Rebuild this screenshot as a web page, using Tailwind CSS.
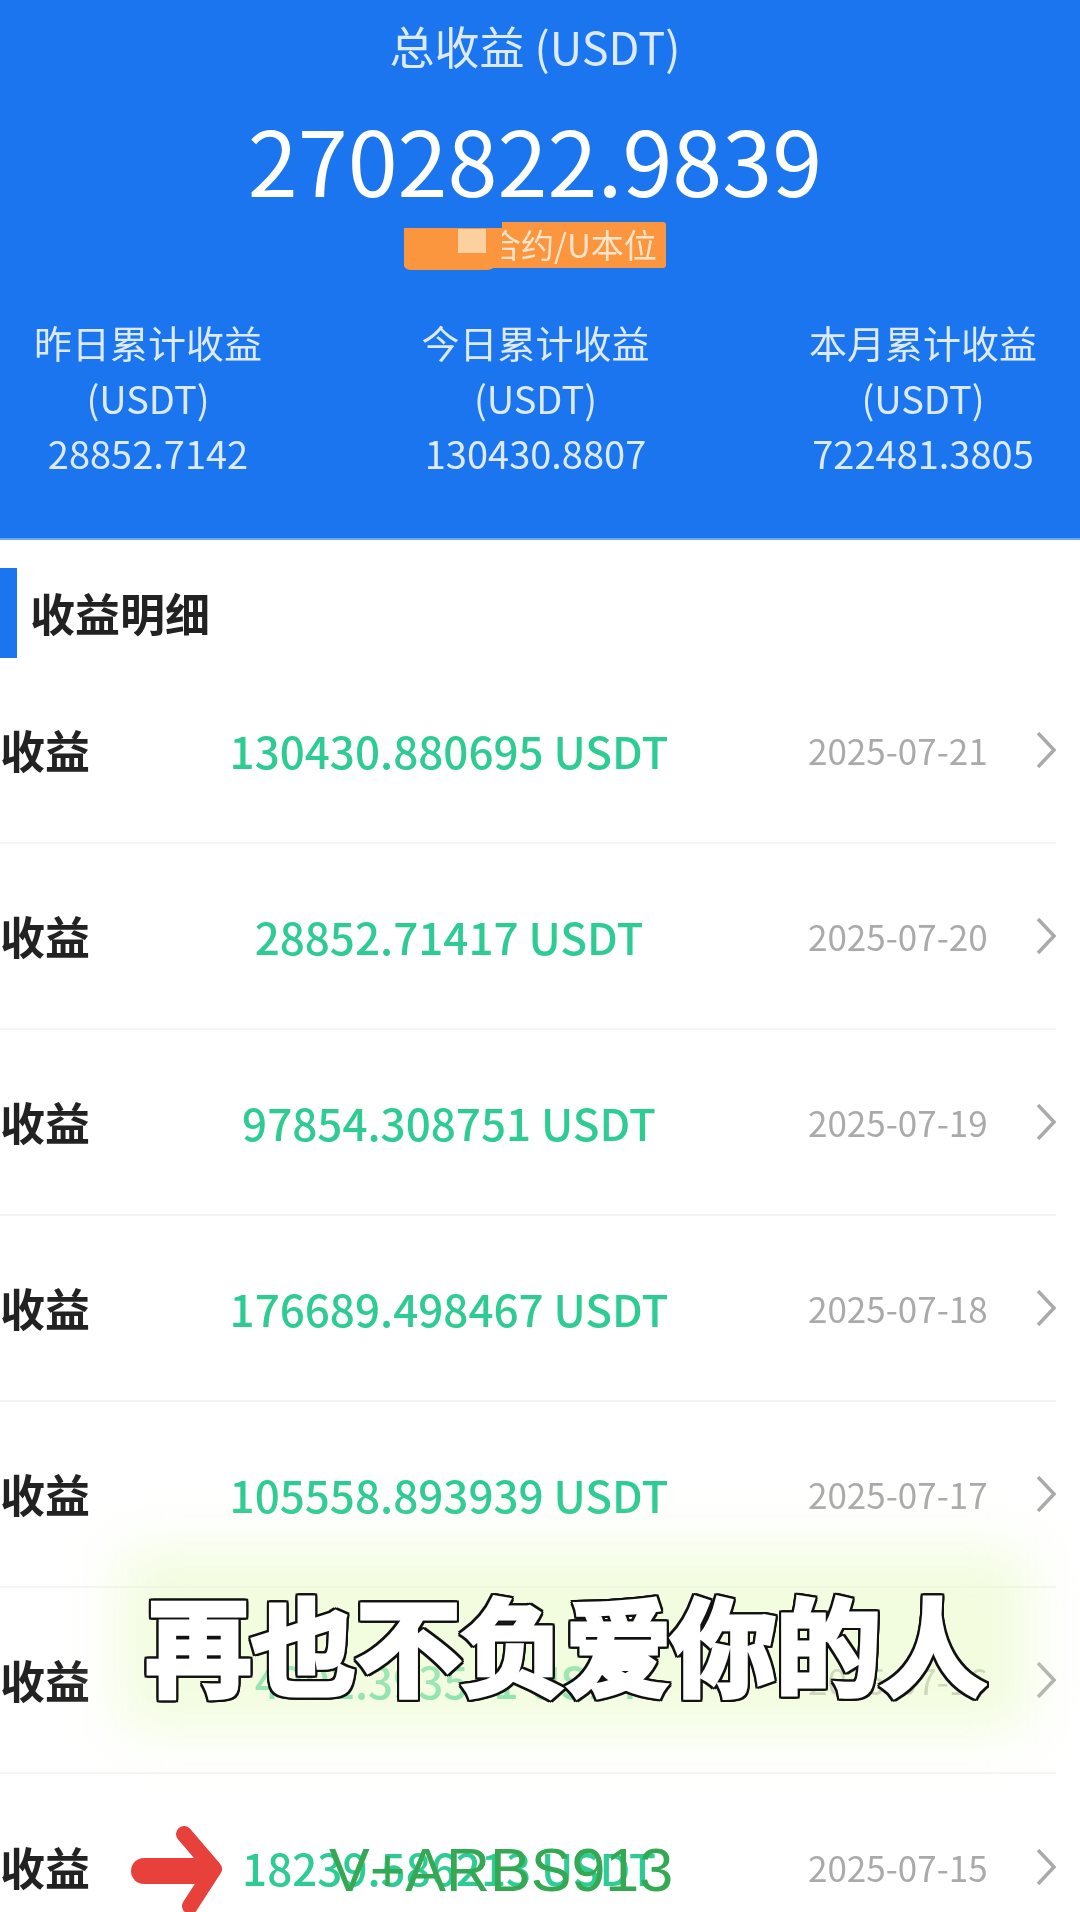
<!DOCTYPE html>
<html lang="zh-CN">
<head>
  <meta charset="UTF-8">
  <title>收益明细</title>
  <script src="https://cdn.jsdelivr.net/npm/@tailwindcss/browser@4"></script>
</head>
<body class="bg-white font-['Noto_Sans_CJK_SC',sans-serif]">
  <div class="relative w-[1080px] h-[1912px] overflow-hidden">

    <!-- Header -->
    <div class="h-[540px] bg-[#1b75ee] border-b-2 border-[#6aa8f7] text-white/90 flex flex-col items-center blur-[0.7px]">
      <div class="w-full pr-[10px] flex flex-col items-center">
        <p class="text-[45px] leading-[56px] mt-[18px] text-white/85">总收益 (USDT)</p>
        <p class="text-[90px] leading-[100px] mt-[34px] text-white">2702822.9839</p>
        <div class="relative mt-[14px] h-[46px] w-[262px] bg-[#fb963f] rounded-[3px] flex items-center pl-[84px] text-[33px] text-[#fde5cc]">
          合约/U本位
          <div class="absolute left-0 top-0 w-[98px] h-[6px] bg-[#1b75ee]"></div>
          <div class="absolute left-0 top-[6px] h-[42px] w-[98px] rounded-bl-[6px] rounded-br-[16px] bg-[#fb963f]"></div>
          <div class="absolute left-[54px] top-[7px] w-[28px] h-[24px] bg-[#fdd0a0]"></div>
        </div>
      </div>
      <div class="w-full mt-[46px] pl-[18px] pr-[27px] flex justify-between text-center text-[38px] leading-[55.5px] text-white/85">
        <div class="w-[260px]"><p>昨日累计收益</p><p>(USDT)</p><p>28852.7142</p></div>
        <div class="w-[260px]"><p>今日累计收益</p><p>(USDT)</p><p>130430.8807</p></div>
        <div class="w-[260px]"><p>本月累计收益</p><p>(USDT)</p><p>722481.3805</p></div>
      </div>
    </div>

    <!-- Section title -->
    <div class="mt-[28px] h-[90px] flex items-center blur-[0.7px]">
      <div class="w-[17px] h-full bg-[#1b75ee]"></div>
      <h2 class="ml-[13px] text-[45px] font-bold text-[#222]">收益明细</h2>
    </div>

    <!-- List -->
    <div class="blur-[0.7px]">
      <div class="grid grid-cols-[90px_718px_1fr_20px] items-center h-[186px] mr-[24px] border-b-2 border-[#f4f4f4]">
        <span class="text-[45px] font-bold text-[#222]">收益</span>
        <span class="text-center text-[44px] font-medium text-[#2fcb94]">130430.880695 USDT</span>
        <span class="text-[35px] text-[#aaa]">2025-07-21</span>
        <svg class="w-[20px] h-[36px]" viewBox="0 0 20 36" fill="none" stroke="#aaa" stroke-width="3.5"><path d="M2 1 L18 18 L2 35"/></svg>
      </div>
      <div class="grid grid-cols-[90px_718px_1fr_20px] items-center h-[186px] mr-[24px] border-b-2 border-[#f4f4f4]">
        <span class="text-[45px] font-bold text-[#222]">收益</span>
        <span class="text-center text-[44px] font-medium text-[#2fcb94]">28852.71417 USDT</span>
        <span class="text-[35px] text-[#aaa]">2025-07-20</span>
        <svg class="w-[20px] h-[36px]" viewBox="0 0 20 36" fill="none" stroke="#aaa" stroke-width="3.5"><path d="M2 1 L18 18 L2 35"/></svg>
      </div>
      <div class="grid grid-cols-[90px_718px_1fr_20px] items-center h-[186px] mr-[24px] border-b-2 border-[#f4f4f4]">
        <span class="text-[45px] font-bold text-[#222]">收益</span>
        <span class="text-center text-[44px] font-medium text-[#2fcb94]">97854.308751 USDT</span>
        <span class="text-[35px] text-[#aaa]">2025-07-19</span>
        <svg class="w-[20px] h-[36px]" viewBox="0 0 20 36" fill="none" stroke="#aaa" stroke-width="3.5"><path d="M2 1 L18 18 L2 35"/></svg>
      </div>
      <div class="grid grid-cols-[90px_718px_1fr_20px] items-center h-[186px] mr-[24px] border-b-2 border-[#f4f4f4]">
        <span class="text-[45px] font-bold text-[#222]">收益</span>
        <span class="text-center text-[44px] font-medium text-[#2fcb94]">176689.498467 USDT</span>
        <span class="text-[35px] text-[#aaa]">2025-07-18</span>
        <svg class="w-[20px] h-[36px]" viewBox="0 0 20 36" fill="none" stroke="#aaa" stroke-width="3.5"><path d="M2 1 L18 18 L2 35"/></svg>
      </div>
      <div class="grid grid-cols-[90px_718px_1fr_20px] items-center h-[186px] mr-[24px] border-b-2 border-[#f4f4f4]">
        <span class="text-[45px] font-bold text-[#222]">收益</span>
        <span class="text-center text-[44px] font-medium text-[#2fcb94]">105558.893939 USDT</span>
        <span class="text-[35px] text-[#aaa]">2025-07-17</span>
        <svg class="w-[20px] h-[36px]" viewBox="0 0 20 36" fill="none" stroke="#aaa" stroke-width="3.5"><path d="M2 1 L18 18 L2 35"/></svg>
      </div>
      <div class="grid grid-cols-[90px_718px_1fr_20px] items-center h-[186px] mr-[24px] border-b-2 border-[#f4f4f4]">
        <span class="text-[45px] font-bold text-[#222]">收益</span>
        <span class="text-center text-[44px] font-medium text-[#2fcb94]">4202.393541 USDT</span>
        <span class="text-[35px] text-[#aaa]">2025-07-16</span>
        <svg class="w-[20px] h-[36px]" viewBox="0 0 20 36" fill="none" stroke="#aaa" stroke-width="3.5"><path d="M2 1 L18 18 L2 35"/></svg>
      </div>
      <div class="grid grid-cols-[90px_718px_1fr_20px] items-center h-[186px] mr-[24px]">
        <span class="text-[45px] font-bold text-[#222]">收益</span>
        <span class="text-center text-[44px] font-medium text-[#2fcb94]">18239.586213 USDT</span>
        <span class="text-[35px] text-[#aaa]">2025-07-15</span>
        <svg class="w-[20px] h-[36px]" viewBox="0 0 20 36" fill="none" stroke="#aaa" stroke-width="3.5"><path d="M2 1 L18 18 L2 35"/></svg>
      </div>
    </div>

    <!-- Video caption overlay -->
    <div class="absolute left-[120px] top-[1550px] w-[910px] h-[180px] bg-[#eafac8]/60 blur-[28px]"></div>
    <p class="absolute left-[146px] top-[1576px] text-[105px] leading-[130px] font-bold whitespace-nowrap text-white [-webkit-text-stroke:5px_#fff] [filter:drop-shadow(2px_0_0_#111)_drop-shadow(-2px_0_0_#111)_drop-shadow(0_2px_0_#111)_drop-shadow(0_-2px_0_#111)]">再也不负爱你的人</p>

    <!-- Arrow + watermark -->
    <svg class="absolute left-[130px] top-[1822px]" width="96" height="90" viewBox="0 0 96 90" fill="none" stroke="#e8403b" stroke-linecap="round" stroke-linejoin="round">
      <path d="M14 49 H76" stroke-width="26"/>
      <path d="M54 12 L84 47 L60 84" stroke-width="16"/>
    </svg>
    <span class="absolute left-[329px] top-[1834px] text-[61px] leading-[72px] font-['Liberation_Sans',sans-serif] text-[#35a853]">V+ARBS913</span>
  </div>
</body>
</html>
